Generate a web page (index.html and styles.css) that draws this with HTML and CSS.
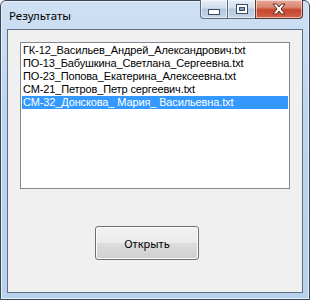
FILE: index.html
```html
<!DOCTYPE html>
<html lang="ru">
<head>
    <meta charset="UTF-8">
    <title>Результаты</title>
    <link rel="stylesheet" href="styles.css">
</head>
<body>
    <div class="window">
        <div class="titlebar">
            <span class="title">Результаты</span>
            <div class="controls">
                <div class="ctl ctl-min">
                    <svg width="12" height="6" viewBox="0 0 12 6"><rect x="0.5" y="0.5" width="11" height="5" fill="#fff" stroke="#3c4d62"/></svg>
                </div>
                <div class="ctl ctl-max">
                    <svg width="12" height="10" viewBox="0 0 12 10"><rect x="0.5" y="0.5" width="11" height="9" fill="#fff" stroke="#3c4d62"/><rect x="3.5" y="3.5" width="5" height="3" fill="#8aa0b8" stroke="#3c4d62"/></svg>
                </div>
                <div class="ctl ctl-close">
                    <svg width="16" height="12" viewBox="0 0 16 12"><path d="M2 1h3.5l2.5 3 2.5-3H14l-4 5 4 5h-3.5L8 8l-2.5 3H2l4-5z" fill="#fff" stroke="#5a2a22" stroke-width="1" stroke-linejoin="round"/></svg>
                </div>
            </div>
        </div>
        <div class="client">
            <div class="listbox">
                <div class="item">ГК-12_Васильев_Андрей_Александрович.txt</div>
                <div class="item">ПО-13_Бабушкина_Светлана_Сергеевна.txt</div>
                <div class="item">ПО-23_Попова_Екатерина_Алексеевна.txt</div>
                <div class="item">СМ-21_Петров_Петр сергеевич.txt</div>
                <div class="item selected">СМ-32_Донскова_ Мария_ Васильевна.txt</div>
            </div>
            <button class="btn">Открыть</button>
        </div>
    </div>
</body>
</html>
```

FILE: styles.css
```css
body {
    margin: 0;
    padding: 0;
    background: #ffffff;
}
.window {
    width: 310px;
    height: 300px;
    box-sizing: border-box;
    border: 1px solid #3a4656;
    border-radius: 6px 6px 0 0;
    background: linear-gradient(to bottom, #cfe0f3 0%, #bcd4ef 40%, #b9d1ec 100%);
    box-shadow: inset 1px 1px 0 #e6f0fb, inset -1px -1px 0 #e6f0fb;
    padding: 0 6px 6px 6px;
}
.titlebar {
    height: 28px;
    display: flex;
    justify-content: space-between;
    align-items: flex-start;
}
.title {
    font-family: "Noto Sans", "DejaVu Sans", sans-serif;
    font-size: 11.5px;
    color: #000;
    margin-top: 7px;
    margin-left: 2px;
}
.controls {
    display: flex;
    margin-top: -1px;
    margin-right: 0;
}
.ctl {
    height: 18px;
    display: flex;
    align-items: center;
    justify-content: center;
    border: 1px solid #5a6b80;
    border-top: none;
    background: linear-gradient(to bottom, #e4edf7 0%, #d2deec 45%, #b4c6dc 50%, #c6d6e8 100%);
    box-shadow: inset 0 0 0 1px rgba(255, 255, 255, 0.55);
}
.ctl-min {
    width: 26px;
    border-radius: 0 0 0 4px;
    border-right: none;
}
.ctl-max {
    width: 27px;
    border-right: none;
}
.ctl-close {
    width: 46px;
    border-color: #5a3530;
    border-radius: 0 0 4px 0;
    background: linear-gradient(to bottom, #e9a999 0%, #d98670 40%, #c8442c 55%, #d2644c 100%);
}
.ctl-min svg {
    margin-top: 5px;
}
.client {
    height: 250px;
    border: 1px solid #5d6f82;
    background: #f0f0f0;
    padding: 12px 0 0 12px;
}
.listbox {
    width: 267px;
    height: 144px;
    border: 1px solid #828790;
    background: #ffffff;
    padding: 1px 0 0 1px;
    font-family: "Liberation Sans", Arial, sans-serif;
    font-size: 11px;
    letter-spacing: -0.13px;
}
.item {
    height: 13px;
    line-height: 13px;
    padding-left: 1px;
    margin-right: 1px;
    color: #000;
    white-space: pre;
}
.item.selected {
    background: #3399ff;
    color: #ffffff;
}
.btn {
    display: block;
    margin: 37px 0 0 75px;
    width: 104px;
    height: 34px;
    border: 1px solid #707070;
    border-radius: 3px;
    background: linear-gradient(to bottom, #f2f2f2 0%, #ebebeb 49%, #dddddd 50%, #cfcfcf 100%);
    box-shadow: inset 0 0 0 1px #fcfcfc;
    font-family: "Noto Sans", "DejaVu Sans", sans-serif;
    font-size: 11px;
    color: #000;
    padding: 0;
}
```
